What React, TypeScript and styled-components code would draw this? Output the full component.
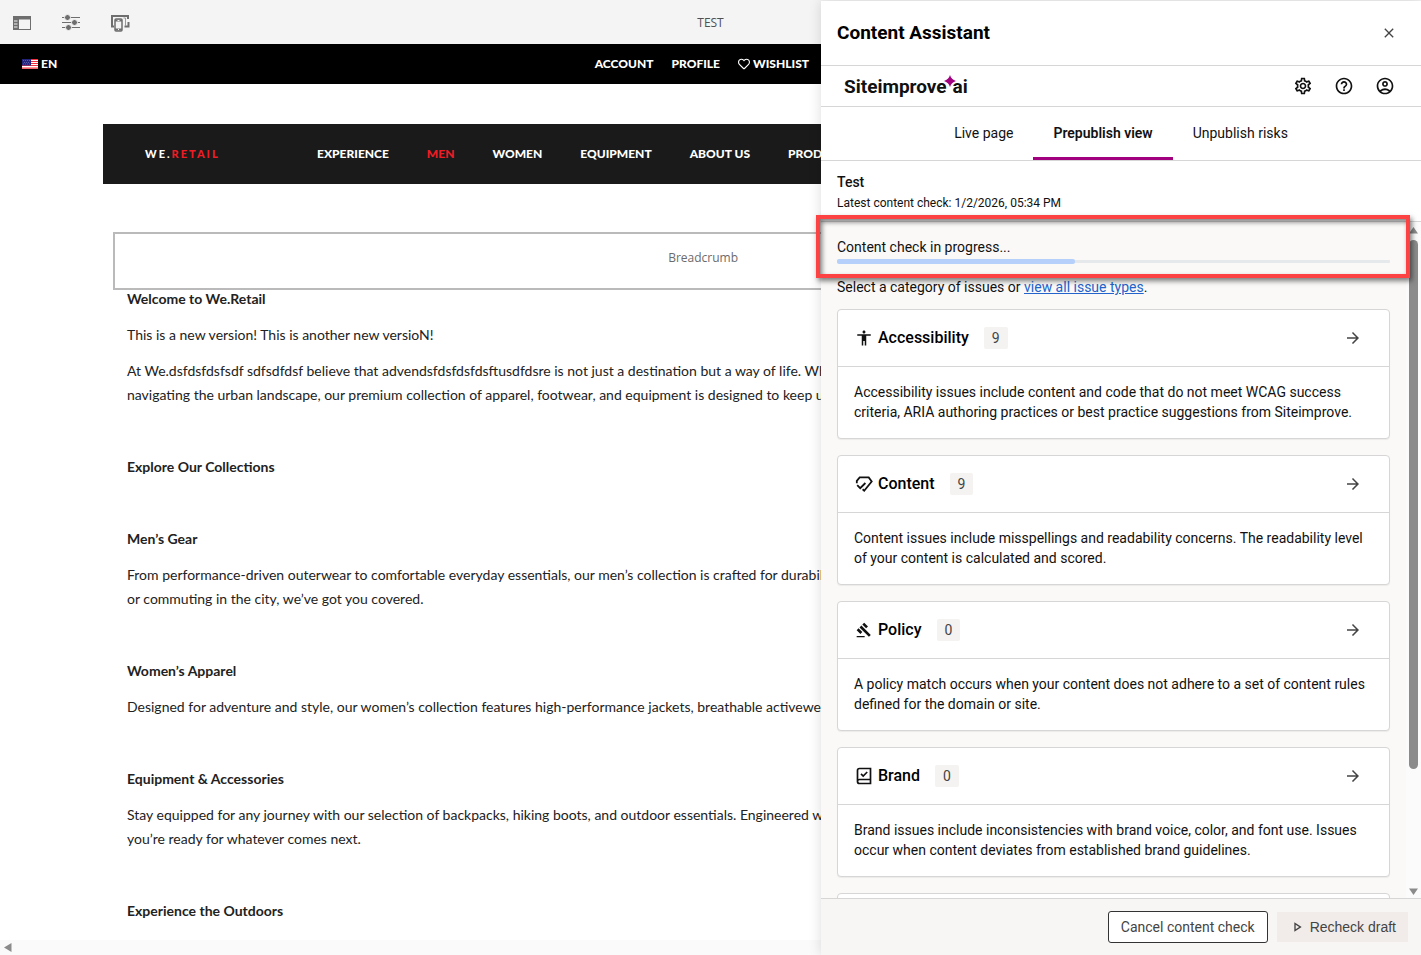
import React from "react";
import styled, { createGlobalStyle } from "styled-components";
import {
  MdAccessibility,
  MdArrowForward,
  MdClose,
  MdGavel,
  MdHelpOutline,
  MdOutlineAccountCircle,
  MdOutlinePlayArrow,
  MdOutlineSettings,
} from "react-icons/md";
import { FaRegHeart } from "react-icons/fa";

const siteFont = `Lato, "Open Sans", sans-serif`;
const panelFont = `Roboto, "Noto Sans", sans-serif`;
const editorFont = `"Open Sans", "Noto Sans", sans-serif`;

const GlobalStyle = createGlobalStyle`
  * { box-sizing: border-box; }
  body { margin: 0; background: #fff; }
  h1, h2, h3, p { margin: 0; }
  button { font-family: inherit; cursor: pointer; }
  svg { display: block; flex: none; }
`;

/* ---------- page frame ---------- */

const Shell = styled.div`
  display: grid;
  grid-template-columns: minmax(0, 1fr) 600px;
  grid-template-rows: 44px minmax(0, 1fr);
  height: 100vh;
  overflow: hidden;
`;

const EditorBar = styled.header`
  grid-column: 1 / -1;
  grid-row: 1;
  display: grid;
  grid-template-columns: 1fr auto 1fr;
  align-items: center;
  padding: 0 12px;
  background: #f4f4f4;
`;

const EditorTools = styled.div`
  display: flex;
  gap: 29px;
`;

const PlainButton = styled.button`
  display: flex;
  padding: 0;
  border: 0;
  background: none;
  color: inherit;
`;

const EditorTitle = styled.h1`
  font: 400 12px/22px ${editorFont};
  padding-top: 2px;
  color: #505050;
`;

/* ---------- edited site ---------- */

const Site = styled.main`
  grid-column: 1;
  grid-row: 2;
  display: flex;
  flex-direction: column;
  overflow: hidden;
  background: #fff;
  color: #222;
  font: 400 14px/24px ${siteFont};
  white-space: nowrap;
`;

const UtilityBar = styled.div`
  flex: none;
  display: flex;
  align-items: center;
  justify-content: space-between;
  height: 40px;
  padding: 0 12px 0 22px;
  background: #000;
  color: #fff;
`;

const LinkRow = styled.nav<{ $gap: number }>`
  display: flex;
  align-items: center;
  gap: ${(p) => p.$gap}px;
`;

const SiteLink = styled.a<{ $active?: boolean }>`
  display: flex;
  align-items: center;
  gap: 3px;
  color: ${(p) => (p.$active ? "#ee1c25" : "#fff")};
  font-size: 12px;
  font-weight: 900;
  text-decoration: none;
`;

const MainBar = styled.div`
  flex: none;
  display: flex;
  align-items: center;
  height: 60px;
  margin: 40px 0 48px 103px;
  padding-left: 42px;
  overflow: hidden;
  background: #1a1a1a;
`;

const SiteLogo = styled.a`
  flex: none;
  width: 172px;
  color: #fff;
  font-size: 11px;
  font-weight: 900;
  letter-spacing: 2px;
  text-decoration: none;

  span { color: #ee1c25; }
`;

const Breadcrumb = styled.div`
  flex: none;
  height: 58px;
  margin-left: 113px;
  padding: 14px 83px 0 0;
  border: 2px solid #bababa;
  border-right: 0;
  color: #6b6b6b;
  font: 400 12px/20px ${editorFont};
  text-align: right;
`;

const Article = styled.article`
  flex: 1;
  min-height: 0;
  display: flex;
  flex-direction: column;
  gap: 12px;
  padding-left: 127px;
  overflow: hidden;
`;

const ArticleHeading = styled.h2`
  margin: 39px 0 3px;
  font-size: 14px;
  font-weight: 700;
  line-height: 18px;

  &:first-child { margin-top: 0; }
`;

const HorizontalScroll = styled.div`
  flex: none;
  display: flex;
  align-items: center;
  height: 15px;
  padding-left: 4px;
  background: #fafafa;
`;

/* ---------- assistant panel ---------- */

const Panel = styled.aside`
  grid-column: 2;
  grid-row: 1 / -1;
  z-index: 1;
  display: flex;
  flex-direction: column;
  min-height: 0;
  margin-top: 1px;
  background: #fff;
  color: #111;
  font: 400 14px/20px ${panelFont};
  box-shadow: 0 0 12px rgba(0, 0, 0, 0.14);
`;

const PanelBar = styled.div<{ $height: number }>`
  flex: none;
  display: flex;
  align-items: center;
  justify-content: space-between;
  height: ${(p) => p.$height}px;
  padding: 0 24px 0 16px;
  border-bottom: 1px solid #d6d6d6;
`;

const PanelTitle = styled.h2`
  color: #000;
  font-size: 19px;
  font-weight: 700;
  line-height: 24px;
`;

const Logo = styled.div`
  display: flex;
  align-items: center;
  padding: 2px 0 0 7px;
  color: #111;
  font-size: 19px;
  font-weight: 700;
  line-height: 24px;

  svg {
    align-self: flex-start;
    margin: 0 -3px;
  }
`;

const IconRow = styled.div`
  display: flex;
  gap: 21px;
  padding-right: 2px;
`;

const Tabs = styled.nav`
  flex: none;
  display: flex;
  justify-content: center;
  height: 54px;
  border-bottom: 1px solid #d6d6d6;
`;

const Tab = styled.button<{ $active?: boolean }>`
  padding: 1px 20px 0;
  border: 0;
  border-bottom: 3px solid ${(p) => (p.$active ? "#a1007e" : "transparent")};
  background: none;
  color: #111;
  font-size: 14px;
  font-weight: ${(p) => (p.$active ? 600 : 400)};
`;

const PageInfo = styled.section`
  flex: none;
  height: 61px;
  padding: 11px 16px 0;
  border-bottom: 1px solid #d6d6d6;
`;

const PageName = styled.h3`
  font-size: 14px;
  font-weight: 500;
  line-height: 20px;
`;

const Small = styled.p`
  font-size: 12px;
  line-height: 22px;
`;

const Body = styled.div`
  position: relative;
  flex: 1;
  display: flex;
  min-height: 0;
  background: #faf9f8;
`;

const Content = styled.div`
  flex: 1;
  min-width: 0;
  padding: 15px 16px 0;
  overflow: hidden;
`;

const ProgressLabel = styled.label`
  display: block;
`;

const ProgressBar = styled.progress`
  appearance: none;
  display: block;
  width: 100%;
  height: 5px;
  margin: 2px 0 13px;
  border: 0;

  &::-webkit-progress-bar {
    border-radius: 2px;
    background: linear-gradient(transparent 1px, #e6e9eb 1px, #e6e9eb 4px, transparent 4px);
  }
  &::-webkit-progress-value {
    border-radius: 2px;
    background: #b5d0fb;
  }
`;

const TextLink = styled.a`
  color: #2263cc;
  text-decoration: underline;
`;

const Callout = styled.div`
  position: absolute;
  inset: -7px 11px auto -5px;
  height: 63px;
  border: 4px solid #fc4242;
  box-shadow: 2px 3px 5px rgba(0, 0, 0, 0.5), inset 2px 3px 5px rgba(0, 0, 0, 0.5);
  pointer-events: none;
`;

const CardList = styled.div`
  display: flex;
  flex-direction: column;
  gap: 16px;
  margin-top: 12px;
`;

const Card = styled.section`
  border: 1px solid #d6d6d6;
  border-radius: 4px;
  background: #fff;
  box-shadow: 0 1px 1px rgba(0, 0, 0, 0.06);
`;

const CardHeader = styled.div`
  display: flex;
  align-items: center;
  height: 57px;
  padding: 0 27px 0 16px;
  border-bottom: 1px solid #d6d6d6;
`;

const CardIcon = styled.span`
  display: flex;
  justify-content: center;
  width: 20px;
`;

const CardTitle = styled.h3`
  margin: 0 15px 0 4px;
  color: #000;
  font-size: 16px;
  font-weight: 500;
  line-height: 20px;
`;

const Count = styled.span`
  padding: 0 8px;
  border-radius: 2px;
  background: #f5f3f1;
  color: #444;
  line-height: 22px;
`;

const CardLink = styled.button`
  display: flex;
  margin-left: auto;
  padding: 0;
  border: 0;
  background: none;
  color: #444;
`;

const CardText = styled.p`
  padding: 15px 16px 16px;
`;

const ScrollTrack = styled.div`
  flex: none;
  display: flex;
  flex-direction: column;
  align-items: center;
  width: 15px;
  padding: 4px 0 2px;
  background: #fbfbfb;
`;

const ScrollThumb = styled.div`
  flex: none;
  height: 79%;
  width: 9px;
  margin: 5px 0 auto;
  border-radius: 5px;
  background: #8b8b8b;
`;

const Footer = styled.footer`
  flex: none;
  display: flex;
  align-items: center;
  justify-content: flex-end;
  gap: 9px;
  height: 57px;
  padding-right: 13px;
  border-top: 1px solid #d6d6d6;
  background: #f7f6f5;
`;

const ActionButton = styled.button<{ $outlined?: boolean }>`
  display: flex;
  align-items: center;
  gap: 5px;
  height: ${(p) => (p.$outlined ? 32 : 30)}px;
  padding: 0 12px;
  border: ${(p) => (p.$outlined ? "1px solid #333" : "0")};
  border-radius: ${(p) => (p.$outlined ? 3 : 0)}px;
  background: ${(p) => (p.$outlined ? "#fff" : "#f1ecea")};
  color: #444;
  font-family: ${(p) => (p.$outlined ? panelFont : `"Liberation Sans", Arial, sans-serif`)};
  font-size: 14px;
`;

/* ---------- drawings ---------- */

const SidePanelIcon = () => (
  <svg width="20" height="20" viewBox="0 0 20 20" fill="#6e6e6e">
    <path d="M1 4h18v14H1zM7 7.500V17h11V7.500z" fillRule="evenodd" />
    <path d="M2 9h3.500M2 12h3.500M2 15h3.500" stroke="#f4f4f4" strokeWidth="1" />
  </svg>
);

const SlidersIcon = () => (
  <svg width="20" height="20" viewBox="0 0 20 20" fill="#6e6e6e">
    <path d="M1 5.500h18M1 10.500h18M1 15.500h18" stroke="#6e6e6e" />
    <g stroke="#f4f4f4">
      <circle cx="6.500" cy="5.500" r="3" />
      <circle cx="13.500" cy="10.500" r="3" />
      <circle cx="7.500" cy="15.500" r="3" />
    </g>
  </svg>
);

const DevicesIcon = () => (
  <svg width="20" height="20" viewBox="0 0 20 20" fill="none" stroke="#6e6e6e">
    <path d="M4 14.500H2V4h16v3M18.500 10v4.500h-4" strokeWidth="2" />
    <path d="M13.500 6h2v8" stroke="#9a9a9a" />
    <rect x="5" y="7" width="7" height="12" rx="1" strokeWidth="1.500" fill="#f4f4f4" />
    <path d="M5 8.500h7M5 17.500h7" strokeWidth="2" />
    <path d="M7.500 8.500h2M8 17.500h1" stroke="#f4f4f4" />
  </svg>
);

const FlagIcon = () => (
  <svg width="16" height="10" viewBox="0 0 16 10">
    <path fill="#fff" d="M0 0h16v10H0z" />
    <path stroke="#f0303a" strokeWidth="1.200" d="M0 .5h16M0 2.500h16M0 4.500h16M0 6.500h16M0 9.200h16" />
    <path fill="#23237c" d="M0 0h9v6.500H0z" />
    <path stroke="#7a7ac0" strokeDasharray="1 1" d="M1 1.500h7M2 3.500h6M1 5h7" strokeWidth=".6" />
  </svg>
);

const Spark = () => (
  <svg width="12" height="12" viewBox="0 0 12 12" fill="#a1007e">
    <path d="M6 0C7 3.200 8.800 5 12 6 8.800 7 7 8.800 6 12 5 8.800 3.200 7 0 6 3.200 5 5 3.200 6 0z" />
  </svg>
);

const ContentIcon = () => (
  <svg width="20" height="20" viewBox="0 0 20 20" fill="none" stroke="#111" strokeWidth="1.800">
    <path d="M2.800 9.300V6.800L5.700 3.400h9l3 4.100-7.500 9.200-1.600-1.400" />
    <path d="M3.200 11.200l3 3 5.200-5.200" />
  </svg>
);

const BrandIcon = () => (
  <svg width="20" height="20" viewBox="0 0 20 20" fill="none" stroke="#111" strokeWidth="1.700">
    <path d="M16.500 13.500V2.500H5.500Q3.500 2.500 3.500 4.500V15.500Q3.500 17.500 5.500 17.500H16.500V13.500H5.500Q3.500 13.500 3.500 15.500" />
    <path d="M7 7.800l2.200 2.200 4-4" />
  </svg>
);

const Arrow = ({ dir }: { dir: "up" | "down" | "left" }) => {
  const d = {
    up: "M4.500 1L9 7.500H0z",
    down: "M4.500 8L0 1.500h9z",
    left: "M0 4.500L7.500 0v9z",
  }[dir];
  return (
    <svg width="9" height="9" viewBox="0 0 9 9" fill="#8b8b8b">
      <path d={d} />
    </svg>
  );
};

/* ---------- data ---------- */

const utilityLinks = ["ACCOUNT", "PROFILE"];
const mainLinks = ["EXPERIENCE", "MEN", "WOMEN", "EQUIPMENT", "ABOUT US", "PRODUCTS"];

const categories = [
  {
    name: "Accessibility",
    count: 9,
    icon: <MdAccessibility size={18} />,
    text: "Accessibility issues include content and code that do not meet WCAG success criteria, ARIA authoring practices or best practice suggestions from Siteimprove.",
  },
  {
    name: "Content",
    count: 9,
    icon: <ContentIcon />,
    text: "Content issues include misspellings and readability concerns. The readability level of your content is calculated and scored.",
  },
  {
    name: "Policy",
    count: 0,
    icon: <MdGavel size={16} />,
    text: "A policy match occurs when your content does not adhere to a set of content rules defined for the domain or site.",
  },
  {
    name: "Brand",
    count: 0,
    icon: <BrandIcon />,
    text: "Brand issues include inconsistencies with brand voice, color, and font use. Issues occur when content deviates from established brand guidelines.",
  },
];

export default function App() {
  return (
    <Shell>
      <GlobalStyle />
      <EditorBar>
        <EditorTools>
          <PlainButton aria-label="Toggle side panel"><SidePanelIcon /></PlainButton>
          <PlainButton aria-label="Page information"><SlidersIcon /></PlainButton>
          <PlainButton aria-label="Emulator"><DevicesIcon /></PlainButton>
        </EditorTools>
        <EditorTitle>TEST</EditorTitle>
      </EditorBar>

      <Site>
        <UtilityBar>
          <SiteLink href="#language"><FlagIcon />EN</SiteLink>
          <LinkRow $gap={18}>
            {utilityLinks.map((l) => (
              <SiteLink key={l} href="#account">{l}</SiteLink>
            ))}
            <SiteLink href="#wishlist"><FaRegHeart size={12} />WISHLIST</SiteLink>
          </LinkRow>
        </UtilityBar>
        <MainBar>
          <SiteLogo href="#home">WE.<span>RETAIL</span></SiteLogo>
          <LinkRow $gap={38}>
            {mainLinks.map((l) => (
              <SiteLink key={l} href="#section" $active={l === "MEN"}>{l}</SiteLink>
            ))}
          </LinkRow>
        </MainBar>
        <Breadcrumb>Breadcrumb</Breadcrumb>
        <Article>
          <ArticleHeading>Welcome to We.Retail</ArticleHeading>
          <p>This is a new version! This is another new versioN!</p>
          <p>
            At We.dsfdsfdsfsdf sdfsdfdsf believe that advendsfdsfdsfdsftusdfdsre is not just a destination but a way of life. Whether
            <br />
            navigating the urban landscape, our premium collection of apparel, footwear, and equipment is designed to keep up
          </p>
          <ArticleHeading>Explore Our Collections</ArticleHeading>
          <ArticleHeading>Men’s Gear</ArticleHeading>
          <p>
            From performance-driven outerwear to comfortable everyday essentials, our men’s collection is crafted for durability
            <br />
            or commuting in the city, we’ve got you covered.
          </p>
          <ArticleHeading>Women’s Apparel</ArticleHeading>
          <p>Designed for adventure and style, our women’s collection features high-performance jackets, breathable activewear</p>
          <ArticleHeading>Equipment &amp; Accessories</ArticleHeading>
          <p>
            Stay equipped for any journey with our selection of backpacks, hiking boots, and outdoor essentials. Engineered with
            <br />
            you’re ready for whatever comes next.
          </p>
          <ArticleHeading>Experience the Outdoors</ArticleHeading>
        </Article>
        <HorizontalScroll><Arrow dir="left" /></HorizontalScroll>
      </Site>

      <Panel>
        <PanelBar $height={65}>
          <PanelTitle>Content Assistant</PanelTitle>
          <PlainButton aria-label="Close"><MdClose size={16} color="#444" /></PlainButton>
        </PanelBar>
        <PanelBar $height={41}>
          <Logo>Siteimprove<Spark />ai</Logo>
          <IconRow>
            <PlainButton aria-label="Settings"><MdOutlineSettings size={20} /></PlainButton>
            <PlainButton aria-label="Help"><MdHelpOutline size={20} /></PlainButton>
            <PlainButton aria-label="Account"><MdOutlineAccountCircle size={20} /></PlainButton>
          </IconRow>
        </PanelBar>
        <Tabs>
          <Tab>Live page</Tab>
          <Tab $active>Prepublish view</Tab>
          <Tab>Unpublish risks</Tab>
        </Tabs>
        <PageInfo>
          <PageName>Test</PageName>
          <Small>Latest content check: 1/2/2026, 05:34 PM</Small>
        </PageInfo>
        <Body>
          <Content>
            <ProgressLabel htmlFor="check-progress">Content check in progress...</ProgressLabel>
            <ProgressBar id="check-progress" value={43} max={100} />
            <p>
              Select a category of issues or <TextLink href="#issues">view all issue types</TextLink>.
            </p>
            <CardList>
              {categories.map((c) => (
                <Card key={c.name}>
                  <CardHeader>
                    <CardIcon>{c.icon}</CardIcon>
                    <CardTitle>{c.name}</CardTitle>
                    <Count>{c.count}</Count>
                    <CardLink aria-label={`Open ${c.name}`}><MdArrowForward size={18} /></CardLink>
                  </CardHeader>
                  <CardText>{c.text}</CardText>
                </Card>
              ))}
              <Card><CardHeader /></Card>
            </CardList>
          </Content>
          <ScrollTrack>
            <Arrow dir="up" />
            <ScrollThumb />
            <Arrow dir="down" />
          </ScrollTrack>
          <Callout />
        </Body>
        <Footer>
          <ActionButton $outlined>Cancel content check</ActionButton>
          <ActionButton><MdOutlinePlayArrow size={16} />Recheck draft</ActionButton>
        </Footer>
      </Panel>
    </Shell>
  );
}
